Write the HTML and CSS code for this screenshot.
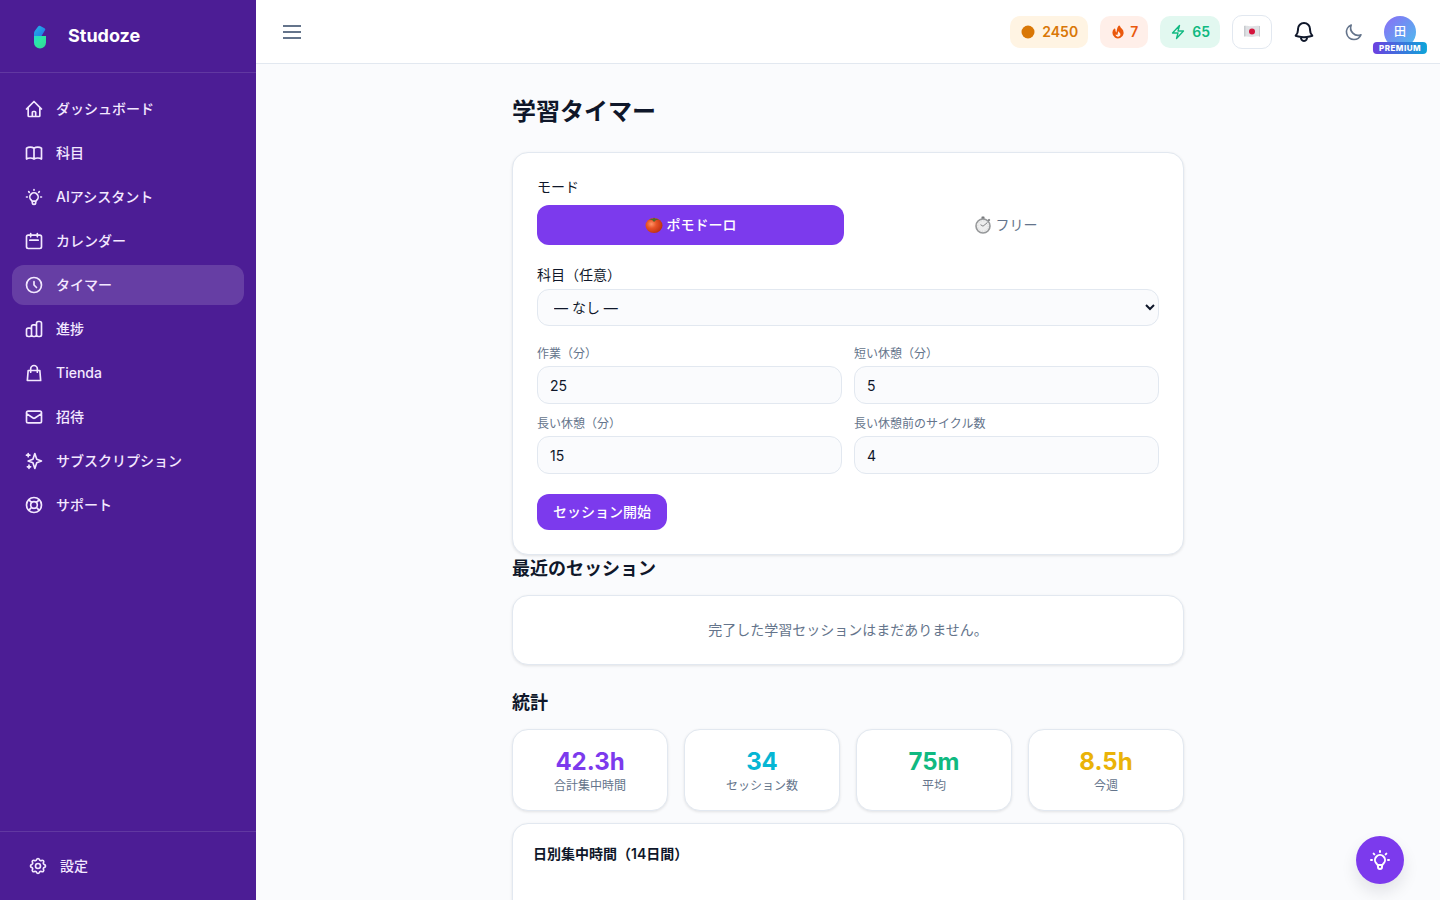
FILE: index.html
```html
<!DOCTYPE html>
<html lang="ja">
<head>
  <meta charset="UTF-8" />
  <meta name="viewport" content="width=device-width, initial-scale=1.0" />
  <title>学習タイマー | Studoze</title>
  <link rel="stylesheet" href="styles.css">
</head>
<body>
  <aside class="sidebar">
    <div class="brand">
      <svg class="brand-logo" viewBox="0 0 40 40" aria-hidden="true">
        <defs>
          <linearGradient id="logoTop" x1="0" y1="0" x2="1" y2="1">
            <stop offset="0" stop-color="#22b8e6" />
            <stop offset="1" stop-color="#2472e8" />
          </linearGradient>
          <linearGradient id="logoBottom" x1="0" y1="0" x2="1" y2="1">
            <stop offset="0" stop-color="#22dcd0" />
            <stop offset=".5" stop-color="#2ee6a0" />
            <stop offset="1" stop-color="#34d399" />
          </linearGradient>
        </defs>
        <path d="M14 20v-2.500c0-1 .3-1.800.9-2.700l3.400-4.500c.5-.7 1.300-.8 2-.4l4.200 2.400c.8.5 1 1.200.5 2L21.500 20z" fill="url(#logoTop)" />
        <path d="M14 20h12v6.500a6 6 0 0 1-12 0z" fill="url(#logoBottom)" />
      </svg>
      <span class="brand-name">Studoze</span>
    </div>
    <nav class="nav">
      <a class="nav-link" href="#">
        <svg class="icon" viewBox="0 0 24 24"><path d="M3 12l2-2m0 0l7-7 7 7M5 10v10a1 1 0 001 1h3m10-11l2 2m-2-2v10a1 1 0 01-1 1h-3m-6 0a1 1 0 001-1v-4a1 1 0 011-1h2a1 1 0 011 1v4a1 1 0 001 1m-6 0h6" /></svg>
        <span>ダッシュボード</span>
      </a>
      <a class="nav-link" href="#">
        <svg class="icon" viewBox="0 0 24 24"><path d="M12 6.253v13m0-13C10.832 5.477 9.246 5 7.500 5S4.168 5.477 3 6.253v13C4.168 18.477 5.754 18 7.500 18s3.332.477 4.500 1.253m0-13C13.168 5.477 14.754 5 16.500 5c1.747 0 3.332.477 4.500 1.253v13C19.832 18.477 18.247 18 16.500 18c-1.746 0-3.332.477-4.500 1.253" /></svg>
        <span>科目</span>
      </a>
      <a class="nav-link" href="#">
        <svg class="icon" viewBox="0 0 24 24"><path d="M9.663 17h4.673M12 3v1m6.364 1.636l-.707.707M21 12h-1M4 12H3m3.343-5.657l-.707-.707m2.828 9.900a5 5 0 117.072 0l-.548.547A3.374 3.374 0 0014 18.469V19a2 2 0 11-4 0v-.531c0-.895-.356-1.754-.988-2.386l-.548-.547z" /></svg>
        <span>AIアシスタント</span>
      </a>
      <a class="nav-link" href="#">
        <svg class="icon" viewBox="0 0 24 24"><path d="M8 7V3m8 4V3m-9 8h10M5 21h14a2 2 0 002-2V7a2 2 0 00-2-2H5a2 2 0 00-2 2v12a2 2 0 002 2z" /></svg>
        <span>カレンダー</span>
      </a>
      <a class="nav-link active" href="#" aria-current="page">
        <svg class="icon" viewBox="0 0 24 24"><path d="M12 8v4l3 3m6-3a9 9 0 11-18 0 9 9 0 0118 0z" /></svg>
        <span>タイマー</span>
      </a>
      <a class="nav-link" href="#">
        <svg class="icon" viewBox="0 0 24 24"><path d="M9 19v-6a2 2 0 00-2-2H5a2 2 0 00-2 2v6a2 2 0 002 2h2a2 2 0 002-2zm0 0V9a2 2 0 012-2h2a2 2 0 012 2v10m-6 0a2 2 0 002 2h2a2 2 0 002-2m0 0V5a2 2 0 012-2h2a2 2 0 012 2v14a2 2 0 01-2 2h-2a2 2 0 01-2-2z" /></svg>
        <span>進捗</span>
      </a>
      <a class="nav-link" href="#">
        <svg class="icon" viewBox="0 0 24 24"><path d="M16 11V7a4 4 0 00-8 0v4M5 9h14l1 12H4L5 9z" /></svg>
        <span>Tienda</span>
      </a>
      <a class="nav-link" href="#">
        <svg class="icon" viewBox="0 0 24 24"><path d="M3 8l7.890 5.260a2 2 0 002.220 0L21 8M5 19h14a2 2 0 002-2V7a2 2 0 00-2-2H5a2 2 0 00-2 2v10a2 2 0 002 2z" /></svg>
        <span>招待</span>
      </a>
      <a class="nav-link" href="#">
        <svg class="icon" viewBox="0 0 24 24"><path d="M5 3v4M3 5h4M6 17v4m-2-2h4m5-16l2.286 6.857L21 12l-5.714 2.143L13 21l-2.286-6.857L5 12l5.714-2.143L13 3z" /></svg>
        <span>サブスクリプション</span>
      </a>
      <a class="nav-link" href="#">
        <svg class="icon" viewBox="0 0 24 24"><path d="M18.364 5.636l-3.536 3.536m0 5.656l3.536 3.536M9.172 9.172L5.636 5.636m3.536 9.192l-3.536 3.536M21 12a9 9 0 11-18 0 9 9 0 0118 0zm-5 0a4 4 0 11-8 0 4 4 0 018 0z" /></svg>
        <span>サポート</span>
      </a>
    </nav>
    <div class="sidebar-footer">
      <a class="nav-link settings-link" href="#">
        <svg class="icon" viewBox="0 0 24 24"><path d="M10.325 4.317c.426-1.756 2.924-1.756 3.350 0a1.724 1.724 0 002.573 1.066c1.543-.94 3.310.826 2.370 2.370a1.724 1.724 0 001.065 2.572c1.756.426 1.756 2.924 0 3.350a1.724 1.724 0 00-1.066 2.573c.94 1.543-.826 3.310-2.370 2.370a1.724 1.724 0 00-2.572 1.065c-.426 1.756-2.924 1.756-3.350 0a1.724 1.724 0 00-2.573-1.066c-1.543.94-3.310-.826-2.370-2.370a1.724 1.724 0 00-1.065-2.572c-1.756-.426-1.756-2.924 0-3.350a1.724 1.724 0 001.066-2.573c-.94-1.543.826-3.310 2.370-2.370.996.608 2.296.07 2.572-1.065z" /><path d="M15 12a3 3 0 11-6 0 3 3 0 016 0z" /></svg>
        <span>設定</span>
      </a>
    </div>
  </aside>

  <div class="page">
    <header class="topbar">
      <button class="menu-button" type="button" aria-label="メニュー">
        <svg class="icon icon-lg" viewBox="0 0 24 24"><path class="butt" d="M3 6h18M3 12h18M3 18h18" /></svg>
      </button>
      <div class="topbar-right">
        <div class="pill coins">
          <svg class="pill-icon" viewBox="0 0 16 16" aria-hidden="true"><circle cx="8" cy="8" r="6.500" /></svg>
          <span>2450</span>
        </div>
        <div class="pill streak">
          <svg class="pill-icon" viewBox="0 0 20 20" aria-hidden="true"><path fill-rule="evenodd" d="M12.395 2.553a1 1 0 00-1.450-.385c-.345.23-.614.558-.822.88-.214.33-.403.713-.57 1.116-.334.804-.614 1.768-.84 2.734a31.365 31.365 0 00-.613 3.580 2.640 2.640 0 01-.945-1.067c-.328-.68-.398-1.534-.398-2.654A1 1 0 005.050 6.050 6.981 6.981 0 003 11a7 7 0 1011.950-4.950c-.592-.591-.98-.985-1.348-1.467-.363-.476-.724-1.063-1.207-2.030zM12.120 15.120A3 3 0 017 13s.879.5 2.500.5c0-1 .5-4 1.250-4.500.5 1 .786 1.293 1.371 1.879A2.990 2.990 0 0113 13a2.990 2.990 0 01-.879 2.121z" /></svg>
          <span>7</span>
        </div>
        <div class="pill energy">
          <svg class="pill-icon line" viewBox="0 0 24 24" aria-hidden="true"><path d="M3.750 13.500l10.500-11.250L12 10.500h8.250L9.750 21.750 12 13.500H3.750z" /></svg>
          <span>65</span>
        </div>
        <button class="lang-button" type="button" aria-label="言語">
          <svg class="flag" viewBox="0 0 16 13"><path d="M0 1c3-.8 5 .6 8 .3S13 .4 16 1v10.500c-3-.6-5 .4-8 .5s-5-.9-8-.2z" fill="#dfe1e4" /><path d="M0 1c.6-.2 1.200-.2 1.500-.2v10.400l-1.500.1zM15 .9L16 1v10.500l-1-.1z" fill="#c8cbcf" /><circle cx="8" cy="6.500" r="3" fill="#d4143c" /></svg>
        </button>
        <button class="bell-button" type="button" aria-label="通知">
          <svg class="icon icon-lg" viewBox="0 0 24 24"><path d="M14.857 17.082a23.848 23.848 0 0 0 5.454-1.310A8.967 8.967 0 0 1 18 9.750V9A6 6 0 0 0 6 9v.75a8.967 8.967 0 0 1-2.312 6.022c1.733.64 3.560 1.085 5.455 1.310m5.714 0a24.255 24.255 0 0 1-5.714 0m5.714 0a3 3 0 1 1-5.714 0" /></svg>
        </button>
        <button class="theme-button" type="button" aria-label="ダークモード">
          <svg class="icon" viewBox="0 0 24 24"><path d="M20.354 15.354A9 9 0 018.646 3.646 9.003 9.003 0 0012 21a9.003 9.003 0 008.354-5.646z" /></svg>
        </button>
        <a class="avatar" href="#">
          <span>田</span>
          <span class="premium">PREMIUM</span>
        </a>
      </div>
    </header>

    <main class="main">
      <div class="content">
        <h1>学習タイマー</h1>

        <form class="card timer-card">
          <div class="mode" role="group" aria-labelledby="modeLabel">
            <span class="label" id="modeLabel">モード</span>
            <div class="mode-buttons">
              <button class="mode-button selected" type="button" aria-pressed="true">
                <svg class="emoji" viewBox="0 0 18 18" aria-hidden="true">
                  <defs>
                    <radialGradient id="tomato" cx=".35" cy=".4" r=".7">
                      <stop offset="0" stop-color="#ff9468" />
                      <stop offset=".4" stop-color="#e85428" />
                      <stop offset="1" stop-color="#b82c10" />
                    </radialGradient>
                  </defs>
                  <ellipse cx="9" cy="9.500" rx="8.500" ry="7.500" fill="url(#tomato)" />
                  <path d="M4 3.500c1.500-.8 3-.8 4-.8L9 1.500l1.200 1.200c1.300 0 2.600.3 3.800 1-1.500 0-2.500.3-3.200.5L9 6 7.500 4.200C6.500 3.800 5.500 3.500 4 3.500z" fill="#4d6b2c" />
                </svg>
                <span>ポモドーロ</span>
              </button>
              <button class="mode-button" type="button" aria-pressed="false">
                <svg class="emoji" viewBox="0 0 18 18" aria-hidden="true">
                  <rect x="7.500" y=".5" width="3" height="3" rx=".6" fill="#77797c" />
                  <path d="M14 5l1.700-1.700" stroke="#77797c" stroke-width="1.800" />
                  <circle cx="9" cy="10" r="7" fill="#eeeeee" stroke="#96989a" stroke-width="1.600" />
                  <circle cx="9" cy="10" r="5.200" fill="none" stroke="#c9cbcd" stroke-width=".8" stroke-dasharray="1 1.700" />
                  <path d="M6.500 8.700L9 10.200l4.500-3.700" fill="none" stroke="#77797c" stroke-width=".9" />
                </svg>
                <span>フリー</span>
              </button>
            </div>
          </div>

          <div class="field">
            <label class="label" for="subject">科目（任意）</label>
            <select id="subject">
              <option>— なし —</option>
            </select>
          </div>

          <div class="durations">
            <div class="field small">
              <label for="work">作業（分）</label>
              <input id="work" type="number" value="25" min="1">
            </div>
            <div class="field small">
              <label for="shortBreak">短い休憩（分）</label>
              <input id="shortBreak" type="number" value="5" min="1">
            </div>
            <div class="field small">
              <label for="longBreak">長い休憩（分）</label>
              <input id="longBreak" type="number" value="15" min="1">
            </div>
            <div class="field small">
              <label for="cycles">長い休憩前のサイクル数</label>
              <input id="cycles" type="number" value="4" min="1">
            </div>
          </div>

          <button class="start-button" type="button">セッション開始</button>
        </form>

        <section class="recent">
          <h2>最近のセッション</h2>
          <p class="card empty">完了した学習セッションはまだありません。</p>
        </section>

        <section class="stats">
          <h2>統計</h2>
          <div class="stat-grid">
            <div class="card stat">
              <strong class="violet">42.3h</strong>
              <span>合計集中時間</span>
            </div>
            <div class="card stat">
              <strong class="cyan">34</strong>
              <span>セッション数</span>
            </div>
            <div class="card stat">
              <strong class="green">75m</strong>
              <span>平均</span>
            </div>
            <div class="card stat">
              <strong class="yellow">8.5h</strong>
              <span>今週</span>
            </div>
          </div>
          <div class="card chart-card">
            <h3>日別集中時間（14日間）</h3>
            <div class="chart"></div>
          </div>
        </section>
      </div>
    </main>
  </div>

  <button class="assistant-button" type="button" aria-label="AIアシスタント">
    <svg class="icon icon-lg" viewBox="0 0 24 24"><path d="M9.663 17h4.673M12 3v1m6.364 1.636l-.707.707M21 12h-1M4 12H3m3.343-5.657l-.707-.707m2.828 9.900a5 5 0 117.072 0l-.548.547A3.374 3.374 0 0014 18.469V19a2 2 0 11-4 0v-.531c0-.895-.356-1.754-.988-2.386l-.548-.547z" /></svg>
  </button>
</body>
</html>
```
FILE: styles.css
```css
* { box-sizing: border-box; }
body { margin: 0; display: flex; height: 100vh; overflow: hidden; background-color: #fafbfd; color: #0f172a; font-family: Inter, "Noto Sans CJK JP", sans-serif; font-size: 14px; line-height: 20px; }
h1, h2, h3, p { margin: 0; }
a { color: inherit; text-decoration: none; }
button, input, select { font: inherit; color: inherit; }
button { border: none; background: none; padding: 0; cursor: pointer; display: flex; align-items: center; justify-content: center; }

.icon { width: 20px; height: 20px; flex-shrink: 0; fill: none; stroke: currentColor; stroke-width: 2; stroke-linecap: round; stroke-linejoin: round; }
.icon-lg { width: 24px; height: 24px; }
.butt { stroke-linecap: butt; }

/* Sidebar */
.sidebar { width: 256px; flex-shrink: 0; display: flex; flex-direction: column; background-color: #4c1d95; color: #f3e8ff; }
.brand { display: flex; align-items: center; gap: 8px; padding: 16px 20px; border-bottom: 1px solid rgba(255, 255, 255, 0.12); }
.brand-logo { width: 40px; height: 40px; }
.brand-name { color: #fff; font-size: 18px; line-height: 28px; font-weight: 700; }
.nav { flex: 1; display: flex; flex-direction: column; gap: 4px; padding: 16px 12px; }
.nav-link { display: flex; align-items: center; gap: 12px; padding: 10px 12px; border-radius: 12px; font-weight: 500; }
.nav-link:hover { background-color: rgba(255, 255, 255, 0.08); }
.nav-link.active { background-color: rgba(255, 255, 255, 0.15); }
.sidebar-footer { padding: 16px; border-top: 1px solid rgba(255, 255, 255, 0.12); }
.settings-link { padding: 8px 12px; }

/* Top bar */
.page { flex: 1; min-width: 0; display: flex; flex-direction: column; }
.topbar { height: 64px; flex-shrink: 0; display: flex; align-items: center; justify-content: space-between; padding: 0 24px; background-color: #fff; border-bottom: 1px solid #e2e8f0; }
.topbar-right { display: flex; align-items: center; gap: 12px; }
.menu-button { color: #64748b; }
.pill { display: flex; align-items: center; gap: 6px; padding: 6px 10px; border-radius: 10px; font-weight: 600; }
.pill-icon { width: 16px; height: 16px; fill: currentColor; }
.pill-icon.line { fill: none; stroke: currentColor; stroke-width: 2; stroke-linejoin: round; }
.coins { background-color: #fff4e3; color: #d97706; }
.streak { gap: 4px; background-color: #ffefe9; color: #ea580c; }
.energy { background-color: #e2f8f0; color: #10b981; }
.lang-button { width: 40px; height: 34px; border: 1px solid #e2e8f0; border-radius: 10px; }
.flag { width: 16px; height: 13px; }
.bell-button { width: 40px; height: 40px; }
.theme-button { width: 36px; height: 36px; color: #64748b; }
.avatar { position: relative; width: 32px; height: 32px; display: flex; align-items: center; justify-content: center; border-radius: 50%; background: linear-gradient(135deg, #8b6cf6, #4cc0ee); color: #fff; font-size: 12px; font-weight: 500; }
.premium { position: absolute; top: 26px; left: 50%; transform: translateX(-50%); padding: 0 6px; border-radius: 4px; background: linear-gradient(90deg, #6d3fe0, #0ea5d9); font-size: 8px; line-height: 12px; font-weight: 800; letter-spacing: 0.5px; }

/* Content */
.main { flex: 1; overflow-y: auto; scrollbar-width: none; padding: 32px; }
.content { max-width: 672px; margin: 0 auto; }
h1 { margin-bottom: 24px; font-size: 24px; line-height: 32px; font-weight: 700; }
h2 { margin-bottom: 12px; font-size: 18px; line-height: 28px; font-weight: 600; }
h3 { font-size: 14px; line-height: 20px; font-weight: 600; }
.card { background-color: #fff; border: 1px solid #e2e8f0; border-radius: 16px; box-shadow: 0 1px 3px rgba(0, 0, 0, 0.1); }

.timer-card { display: flex; flex-direction: column; align-items: stretch; gap: 20px; padding: 24px; }
.mode { display: flex; flex-direction: column; gap: 8px; }
.mode-buttons { display: grid; grid-template-columns: 1fr 1fr; gap: 8px; }
.mode-button { gap: 4px; padding: 10px 16px; border-radius: 12px; color: #64748b; }
.mode-button.selected { background-color: #7c3aed; color: #fff; font-weight: 500; }
.emoji { width: 18px; height: 18px; }
.field { display: flex; flex-direction: column; gap: 4px; }
.field.small label { color: #64748b; font-size: 12px; line-height: 16px; }
.field input, .field select { width: 100%; border: 1px solid #e2e8f0; border-radius: 12px; background-color: #fafbfd; }
.field input { height: 38px; padding: 8px 12px; }
.field select { height: 37px; padding: 8px 0 8px 12px; }
.durations { display: grid; grid-template-columns: 1fr 1fr; gap: 12px; }
.start-button { align-self: flex-start; padding: 8px 16px; border-radius: 12px; background-color: #7c3aed; color: #fff; font-weight: 500; }

.recent { margin-bottom: 24px; }
.empty { padding: 24px; text-align: center; color: #64748b; }

.stat-grid { display: grid; grid-template-columns: repeat(4, 1fr); gap: 16px; margin-bottom: 12px; }
.stat { display: flex; flex-direction: column; align-items: center; padding: 16px; }
.stat strong { font-size: 24px; line-height: 32px; font-weight: 700; }
.stat span { color: #64748b; font-size: 12px; line-height: 16px; }
.violet { color: #7c3aed; }
.cyan { color: #06b6d4; }
.green { color: #10b981; }
.yellow { color: #eab308; }
.chart-card { padding: 20px; }
.chart { height: 160px; }

.assistant-button { position: fixed; right: 36px; bottom: 16px; width: 48px; height: 48px; border-radius: 50%; background-color: #7c3aed; color: #fff; box-shadow: 0 8px 16px rgba(15, 23, 42, 0.1); }
```
